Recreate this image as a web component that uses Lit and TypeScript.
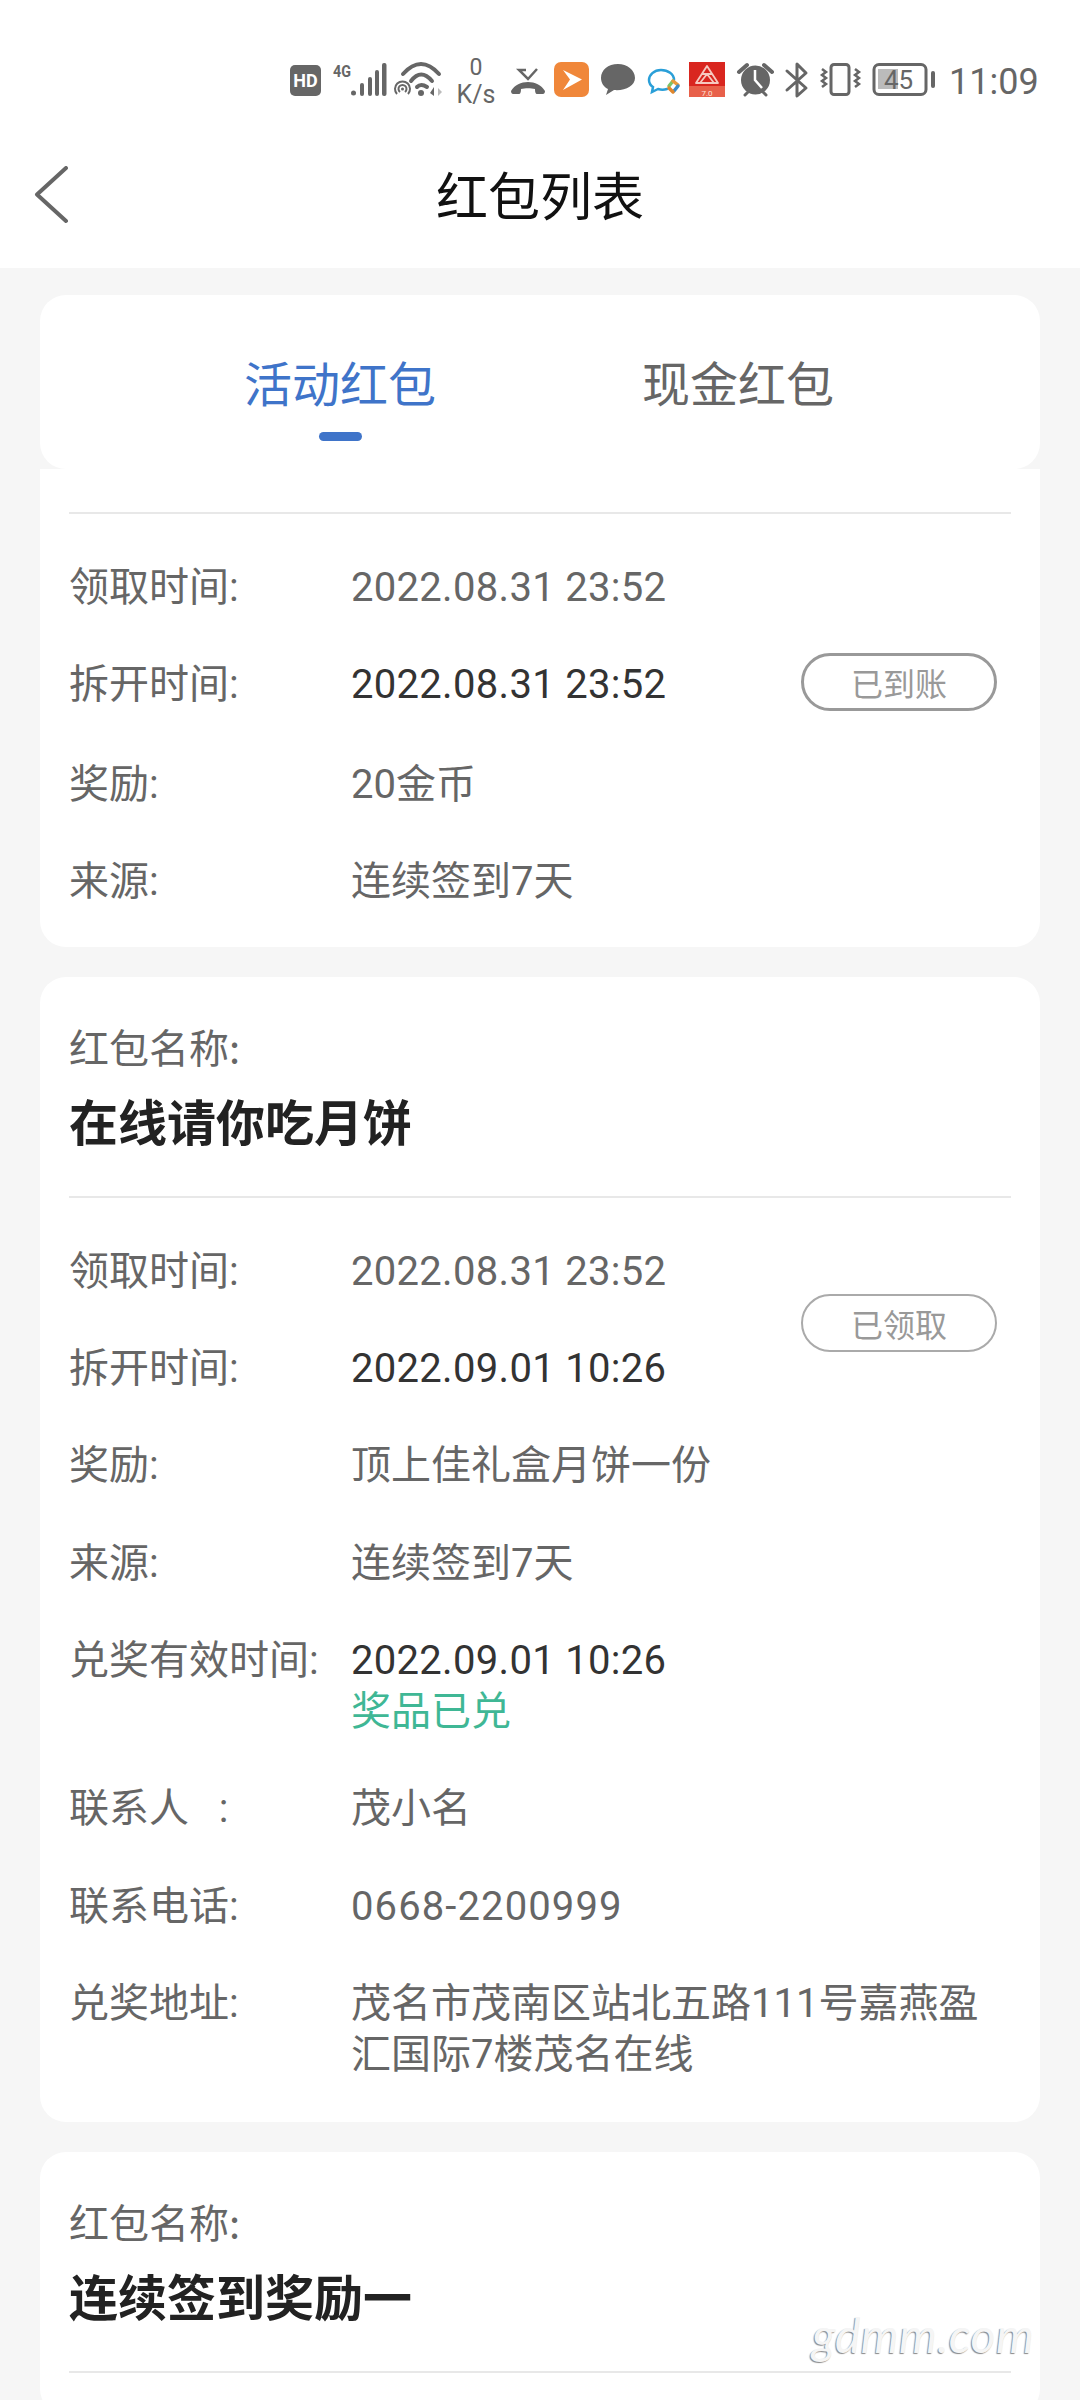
import { LitElement, html, css, svg } from "lit";
import { customElement } from "lit/decorators.js";

type Row = { k: string; v: string; dark?: boolean; extra?: string; cls?: string };

const c1: Row[] = [
  { k: "领取时间:", v: "2022.08.31 23:52", cls: "date" },
  { k: "拆开时间:", v: "2022.08.31 23:52", dark: true, cls: "date" },
  { k: "奖励:", v: "20金币" },
  { k: "来源:", v: "连续签到7天" },
];
const c2: Row[] = [
  { k: "领取时间:", v: "2022.08.31 23:52", cls: "date" },
  { k: "拆开时间:", v: "2022.09.01 10:26", dark: true, cls: "date" },
  { k: "奖励:", v: "顶上佳礼盒月饼一份" },
  { k: "来源:", v: "连续签到7天" },
  { k: "兑奖有效时间:", v: "2022.09.01 10:26", dark: true, extra: "奖品已兑", cls: "date" },
  { k: "联系人\u00a0\u00a0\u00a0:", v: "茂小名" },
  { k: "联系电话:", v: "0668-2200999", cls: "phone" },
  { k: "兑奖地址:", v: "茂名市茂南区站北五路111号嘉燕盈汇国际7楼茂名在线" },
];

@customElement("app-root")
export class AppRoot extends LitElement {
  static styles = css`
    :host { display: block; width: 1080px; height: 2400px; overflow: hidden; background: #f6f6f6;
      font-family: Roboto, "Noto Sans CJK SC", sans-serif; position: relative; }
    .top { background: #fff; height: 268px; display: flex; flex-direction: column; }
    .status { height: 116px; padding: 50px 40px 0 0; box-sizing: border-box; display: flex; justify-content: flex-end; }
    .status svg { display: block; }
    .nav { flex: 1; display: flex; align-items: center; justify-content: center; position: relative; padding-top: 3px; box-sizing: border-box; }
    .title { font-size: 52px; color: #111; font-family: "Noto Sans CJK SC", sans-serif; font-weight: 400; }
    .back { position: absolute; left: 34px; top: 50px; }
    .list { padding: 27px 40px 0; }
    .tabs { background: #fff; height: 174px; border-radius: 26px; display: flex; padding-left: 204px; box-sizing: border-box; }
    .tab { width: 400px; padding-top: 55px; font-size: 48px; line-height: 62px; color: #666; font-family: "Noto Sans CJK SC", sans-serif; position: relative; }
    .tab.on { color: #3f74c9; }
    .tab.on::after { content: ""; position: absolute; left: 75px; top: 137px; width: 43px; height: 9px; border-radius: 5px; background: #3f74c9; }
    .card { background: #fff; border-radius: 26px; padding: 44px 29px 42px; margin-bottom: 30px; position: relative; }
    .card.first { border-radius: 0 0 26px 26px; padding-top: 43px; padding-bottom: 40px; }
    .label { font-size: 40px; line-height: 51px; color: #666; font-family: "Noto Sans CJK SC", sans-serif; }
    .name { font-size: 49px; line-height: 64px; font-weight: 700; color: #222; margin-top: 16px; font-family: "Noto Sans CJK SC", sans-serif; }
    .divider { height: 2px; background: #e8e8e8; margin-top: 44px; }
    .first .divider { margin-top: 0; }
    .rows { display: flex; flex-direction: column; gap: 46.3px; padding-top: 48px; position: relative; }
    .row { display: grid; grid-template-columns: 282px 1fr; font-size: 40px; line-height: 51px; color: #666; padding-right: 20px; }
    .first .row:nth-child(2) { margin-bottom: 2px; }
    .dark { color: #333; }
    .date { letter-spacing: 0.3px; }
    .phone { letter-spacing: 1.1px; }
    .green { color: #3fb795; }
    .badge { position: absolute; right: 14px; width: 196px; height: 58px; box-sizing: border-box; border-radius: 29px; border: 3px solid #999; color: #999; font-size: 32px;
      display: flex; align-items: center; justify-content: center; background: #fff; font-family: "Noto Sans CJK SC", sans-serif; }
    .badge.thin { border-width: 2px; border-color: #aaa; }
    .b1 { top: 139px; }
    .b2 { top: 96px; }
    .mark { position: absolute; left: 812px; top: 2306px; font-family: Lato, sans-serif; font-style: italic; font-weight: 400; font-size: 48px; letter-spacing: 0.4px; color: #f5f5f5;
      text-shadow: -1px 1px 1px #888; }
  `;

  private statusBar() {
    const g = "#666";
    return html`<svg width="760" height="60" viewBox="280 50 760 60" font-family="Roboto, sans-serif">
      ${svg`
      <rect x="290" y="65" width="31" height="31" rx="5" fill="${g}"/>
      <text x="305.500" y="87" text-anchor="middle" font-size="18" font-weight="700" fill="#fff">HD</text>
      <text x="333" y="77" font-size="17" font-weight="700" fill="${g}" textLength="18" lengthAdjust="spacingAndGlyphs">4G</text>
      <g fill="${g}">
        <circle cx="353.500" cy="93" r="2.500"/>
        <rect x="360" y="83" width="4" height="13" rx="2"/>
        <rect x="368" y="77" width="4" height="19" rx="2"/>
        <rect x="375" y="70" width="4" height="26" rx="2"/>
        <rect x="382" y="63" width="4.500" height="33" rx="2"/>
      </g>
      <g fill="none" stroke="${g}" stroke-width="4" stroke-linecap="round">
        <path d="M403 74 Q421 54 439 74"/>
        <path d="M411 81 Q421 68 432 81"/>
        <path d="M417 87 Q421 83 427 87"/>
      </g>
      <circle cx="421" cy="93" r="3" fill="${g}"/>
      <g fill="none" stroke="${g}" stroke-width="2">
        <path d="M397 94 a7.500 7.500 0 1 1 11 0"/>
        <path d="M400 92 a4 4 0 1 1 5 0"/>
      </g>
      <circle cx="402.500" cy="89" r="1.500" fill="${g}"/>
      <path d="M434 96 v-9 l-4 6z" fill="${g}"/>
      <path d="M438 88 l4 4 -4 4z" fill="#bbb"/>
      <text x="476" y="75" text-anchor="middle" font-size="23" fill="${g}">0</text>
      <text x="476" y="103" text-anchor="middle" font-size="25" fill="${g}">K/s</text>
      <path d="M511 91 c7 -12 27 -12 34 0 c0 2 -1 3 -2 3 l-6 0 c-1 0 -2 -1 -2 -5 c-4 -1 -10 -1 -14 0 c0 4 -1 5 -2 5 l-6 0 c-1 0 -2 -1 -2 -3z" fill="${g}"/>
      <path d="M526 70 H519 L528 79 L537 69" fill="none" stroke="${g}" stroke-width="2.500"/>
      <rect x="554" y="62" width="35" height="35" rx="7" fill="#f0873a"/>
      <path d="M563 70 L582 79.500 L563 90 L570 79.500z" fill="#fff"/>
      <path d="M618 64 c-10 0 -17 6 -17 14 c0 5 3 9 7 11 l-2 6 l8 -5 c11 1 21 -4 21 -12 c0 -8 -8 -14 -17 -14z" fill="${g}"/>
      <path d="M661 70 c-7 0 -12 5 -12 10 c0 3 1 5 4 7 l-1 5 6 -3 c3 1 6 1 9 0 M674 80 c0 -6 -6 -10 -13 -10" fill="none" stroke="#2a9fd8" stroke-width="2.500" stroke-linecap="round"/>
      <path d="M669 86 l4 -5" stroke="#7cc36a" stroke-width="3.500" stroke-linecap="round"/>
      <path d="M673 81 l5 4" stroke="#e89a3c" stroke-width="3.500" stroke-linecap="round"/>
      <path d="M678 86 l-4 5" stroke="#3a8cc8" stroke-width="3.500" stroke-linecap="round"/>
      <path d="M673 92 l-4 -4" stroke="#e0862c" stroke-width="3.500" stroke-linecap="round"/>
      <rect x="689" y="62" width="36" height="35" fill="#d9261f"/>
      <rect x="689" y="86" width="36" height="11" fill="#e8604a"/>
      <path d="M707 66 L718 83 H696z M702 74 h10 M700 83 L707 74 L714 83" fill="none" stroke="#f6c9c0" stroke-width="1.800" stroke-linejoin="round"/>
      <text x="707" y="96" text-anchor="middle" font-size="8" fill="#fde0d8">7.0</text>
      <circle cx="755.500" cy="80" r="14.500" fill="${g}"/>
      <path d="M755 70 v10 l7 8" fill="none" stroke="#fff" stroke-width="2.500"/>
      <path d="M739 72 l8 -7 M772 72 l-8 -7" stroke="${g}" stroke-width="4" stroke-linecap="round"/>
      <path d="M745 95 l3 -3 M766 95 l-3 -3" stroke="${g}" stroke-width="3" stroke-linecap="round"/>
      <path d="M787 71 L806 88 L797 96 V64 L806 73 L787 90" fill="none" stroke="${g}" stroke-width="3" stroke-linejoin="round" stroke-linecap="round"/>
      <rect x="831" y="64.500" width="18" height="30" rx="3" fill="none" stroke="${g}" stroke-width="3"/>
      <path d="M822 69 l4 3 -4 3 4 3 -4 3 4 3 -4 3 M855 69 l4 3 -4 3 4 3 -4 3 4 3 -4 3" fill="none" stroke="${g}" stroke-width="2.500"/>
      <rect x="874" y="64.500" width="52" height="30" rx="5" fill="none" stroke="${g}" stroke-width="3"/>
      <rect x="878" y="69" width="20" height="20" fill="#bbb"/>
      <rect x="931" y="71" width="4" height="17" rx="2" fill="${g}"/>
      <text x="898.500" y="89" text-anchor="middle" font-size="26" fill="${g}">45</text>
      <text x="949" y="94" font-size="36" fill="${g}">11:09</text>
      `}
    </svg>`;
  }

  private rows(rows: Row[]) {
    return rows.map(
      (r) => html`<div class="row">
        <div>${r.k}</div>
        <div>
          <div class="${r.dark ? "dark" : ""} ${r.cls ?? ""}">${r.v}</div>
          ${r.extra ? html`<div class="green">${r.extra}</div>` : ""}
        </div>
      </div>`
    );
  }

  render() {
    return html`
      <div class="top">
        <div class="status">${this.statusBar()}</div>
        <div class="nav">
          <svg class="back" width="36" height="58" viewBox="0 0 36 58">
            <path d="M32 2 L3 28.500 L32 55" fill="none" stroke="#666" stroke-width="4" stroke-linecap="round" stroke-linejoin="round"/>
          </svg>
          <div class="title">红包列表</div>
        </div>
      </div>
      <div class="list">
        <div class="tabs">
          <div class="tab on">活动红包</div>
          <div class="tab">现金红包</div>
        </div>
        <div class="card first">
          <div class="divider"></div>
          <div class="rows">
            ${this.rows(c1)}
            <div class="badge b1">已到账</div>
          </div>
        </div>
        <div class="card">
          <div class="label">红包名称:</div>
          <div class="name">在线请你吃月饼</div>
          <div class="divider"></div>
          <div class="rows">
            ${this.rows(c2)}
            <div class="badge thin b2">已领取</div>
          </div>
        </div>
        <div class="card">
          <div class="label">红包名称:</div>
          <div class="name">连续签到奖励一</div>
          <div class="divider"></div>
        </div>
      </div>
      <div class="mark">gdmm.com</div>
    `;
  }
}
